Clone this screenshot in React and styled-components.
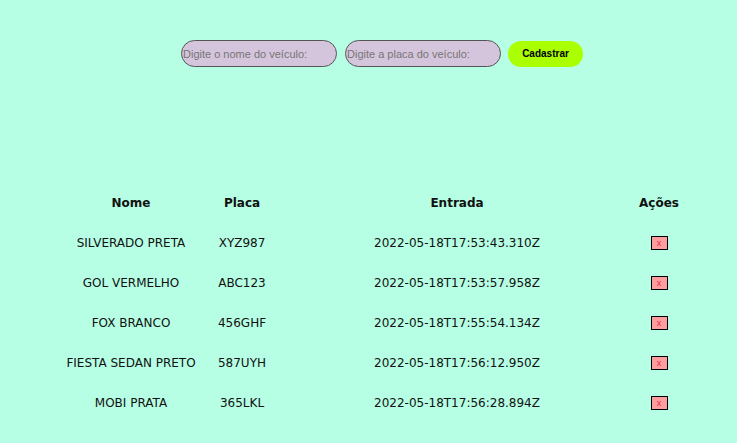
import React from 'react';
import styled, { createGlobalStyle } from 'styled-components';

const vehicles = [
  { nome: 'SILVERADO PRETA', placa: 'XYZ987', entrada: '2022-05-18T17:53:43.310Z' },
  { nome: 'GOL VERMELHO', placa: 'ABC123', entrada: '2022-05-18T17:53:57.958Z' },
  { nome: 'FOX BRANCO', placa: '456GHF', entrada: '2022-05-18T17:55:54.134Z' },
  { nome: 'FIESTA SEDAN PRETO', placa: '587UYH', entrada: '2022-05-18T17:56:12.950Z' },
  { nome: 'MOBI PRATA', placa: '365LKL', entrada: '2022-05-18T17:56:28.894Z' }
];

const GlobalStyle = createGlobalStyle`
  html, body {
    margin: 0;
    padding: 0;
    background: #b6ffe4;
    min-height: 100%;
  }
  body {
    font-family: "DejaVu Sans", Verdana, sans-serif;
    color: #111;
  }
`;

const Page = styled.div`
  width: 737px;
  min-height: 443px;
  background: #b6ffe4;
  padding-top: 40px;
  box-sizing: border-box;
`;

const Form = styled.form`
  display: flex;
  justify-content: center;
  align-items: center;
  gap: 8px;
  padding-left: 27px;
`;

const Input = styled.input`
  width: 156px;
  height: 27px;
  box-sizing: border-box;
  padding: 0 1px;
  border: 1px solid #555;
  border-radius: 14px;
  background: #d5c5dc;
  font-family: "Liberation Sans", Arial, sans-serif;
  font-size: 11px;
  color: #333;
  outline: none;

  ::placeholder {
    color: #6b6b6b;
  }
`;

const Button = styled.button`
  width: 75px;
  height: 26px;
  margin-left: -1px;
  border: none;
  border-radius: 13px;
  background: #aaff00;
  font-family: "Liberation Sans", Arial, sans-serif;
  font-size: 10px;
  font-weight: bold;
  color: #000;
  cursor: pointer;
`;

const Table = styled.table`
  margin: 116px 0 0 60px;
  border-collapse: collapse;
  font-size: 12px;
`;

const Col = styled.col`
  width: ${({ w }) => w}px;
`;

const Th = styled.th`
  height: 40px;
  padding: 0;
  font-weight: bold;
  text-align: center;
  vertical-align: middle;
`;

const Td = styled.td`
  height: 40px;
  padding: 0;
  text-align: center;
  vertical-align: middle;
  white-space: nowrap;
`;

const DeleteButton = styled.button`
  width: 17px;
  height: 14px;
  padding: 0;
  border: 1px solid #000;
  background: #ff9e9e;
  color: #f0304a;
  font-family: "Liberation Sans", Arial, sans-serif;
  font-size: 9px;
  line-height: 10px;
  cursor: pointer;
  vertical-align: middle;
`;

export default function App() {
  return (
    <Page>
      <GlobalStyle />
      <Form onSubmit={(e) => e.preventDefault()}>
        <Input placeholder="Digite o nome do veículo:" />
        <Input placeholder="Digite a placa do veículo:" />
        <Button type="submit">Cadastrar</Button>
      </Form>
      <Table>
        <colgroup>
          <Col w={142} />
          <Col w={80} />
          <Col w={350} />
          <Col w={54} />
        </colgroup>
        <thead>
          <tr>
            <Th>Nome</Th>
            <Th>Placa</Th>
            <Th>Entrada</Th>
            <Th>Ações</Th>
          </tr>
        </thead>
        <tbody>
          {vehicles.map((v) => (
            <tr key={v.placa}>
              <Td>{v.nome}</Td>
              <Td>{v.placa}</Td>
              <Td>{v.entrada}</Td>
              <Td>
                <DeleteButton>x</DeleteButton>
              </Td>
            </tr>
          ))}
        </tbody>
      </Table>
    </Page>
  );
}
